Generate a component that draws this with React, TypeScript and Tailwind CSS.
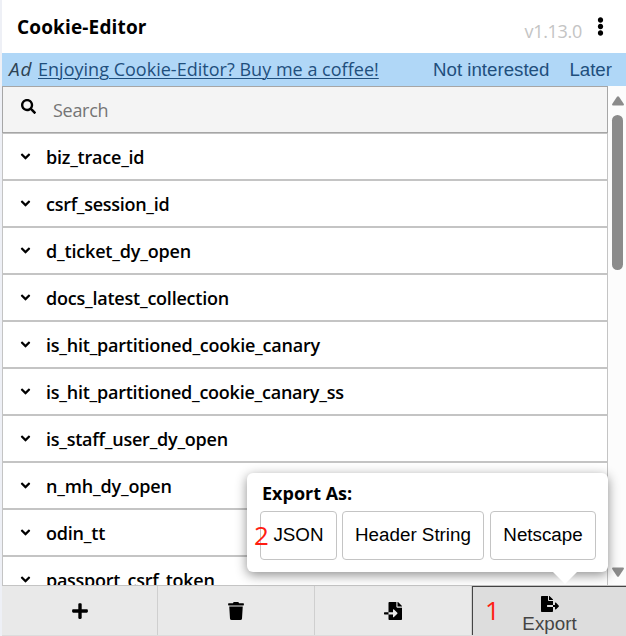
import { FaAngleDown, FaEllipsisV, FaFileExport, FaFileImport, FaPlus, FaSearch, FaTrash } from 'react-icons/fa';

const cookies = [
  { name: 'biz_trace_id', tracking: 'tracking-[-0.22px]' },
  { name: 'csrf_session_id', tracking: 'tracking-[-0.28px]' },
  { name: 'd_ticket_dy_open', tracking: 'tracking-[-0.18px]' },
  { name: 'docs_latest_collection', tracking: 'tracking-[-0.22px]' },
  { name: 'is_hit_partitioned_cookie_canary', tracking: 'tracking-[-0.22px]' },
  { name: 'is_hit_partitioned_cookie_canary_ss', tracking: 'tracking-[-0.24px]' },
  { name: 'is_staff_user_dy_open', tracking: 'tracking-[-0.24px]' },
  { name: 'n_mh_dy_open', tracking: 'tracking-[-0.18px]' },
  { name: 'odin_tt', tracking: 'tracking-[-0.2px]' },
  { name: 'passport_csrf_token', tracking: 'tracking-[-0.27px]' },
];

const sans = "font-['Open_Sans','Noto_Sans',sans-serif]";
const arial = "font-['Liberation_Sans',Arial,sans-serif]";

function Header() {
  return (
    <header className="flex h-[53px] shrink-0 items-start justify-between bg-white pr-[22px] pl-[15px]">
      <h1 className="pt-[14px] text-[19px] leading-[27px] font-bold tracking-[0.15px]">Cookie-Editor</h1>
      <div className="flex">
        <span className="pt-[18px] text-[18px] leading-[27px] tracking-[-0.3px] text-[#c4c4c4]">v1.13.0</span>
        <FaEllipsisV className="-mr-[6px] mt-[17px] ml-[9px] h-[19px] w-[19px]" />
      </div>
    </header>
  );
}

function AdBar() {
  return (
    <div className="flex h-[33px] shrink-0 items-center bg-[#b0d7f7] pr-[14px] pl-[7px] text-[18px] leading-[33px] whitespace-nowrap text-[#1f4f7d]">
      <span className="w-[29px] text-[19px] tracking-[0.8px] text-[#2d4353] italic">Ad</span>
      <a className="tracking-[0.02px] underline decoration-1 underline-offset-2">Enjoying Cookie-Editor? Buy me a coffee!</a>
      <div className={`ml-auto flex gap-5 text-[18.7px] ${arial}`}>
        <span>Not interested</span>
        <span>Later</span>
      </div>
    </div>
  );
}

function Scrollbar() {
  return (
    <div className="flex w-[18px] shrink-0 flex-col items-center bg-[#fcfcfc] pl-px">
      <svg className="mt-[10px] h-[10px] w-[12px]" viewBox="0 0 12 10" fill="#8b8b8b">
        <path d="M5 .8Q6-.4 7 .8L11.8 8Q12.3 9.5 11 9.5H1Q-.3 9.5.2 8Z" />
      </svg>
      <div className="mt-[9px] h-[155px] w-[11px] rounded-full bg-[#8b8b8b]" />
      <svg className="mt-auto mb-[8px] h-[10px] w-[12px]" viewBox="0 0 12 10" fill="#8b8b8b">
        <path d="M5 9.2Q6 10.4 7 9.2L11.8 2Q12.3.5 11 .5H1Q-.3.5.2 2Z" />
      </svg>
    </div>
  );
}

function ExportMenu() {
  const option = `flex h-[49px] items-center justify-center rounded-[4px] border border-[#c4c4c4] bg-white pb-px text-[18.8px] whitespace-nowrap ${arial}`;
  return (
    <div className="absolute top-[473px] left-[247px] h-[99px] w-[361px] rounded-[6px] bg-white pl-[13px] shadow-[0_3px_12px_rgba(0,0,0,0.45)]">
      <div className="h-[38px] pt-[7px] pl-[2px] text-[18px] leading-[27px] font-bold">Export As:</div>
      <div className="flex">
        <button className={`w-[77px] ${option}`}>JSON</button>
        <button className={`ml-[5px] w-[142px] ${option}`}>Header String</button>
        <button className={`ml-[6px] w-[106px] ${option}`}>Netscape</button>
      </div>
      <svg className="absolute top-[98px] left-[305px] h-[13px] w-[26px]" viewBox="0 0 26 13" fill="#fff">
        <path d="M0 0H26L13 13Z" />
      </svg>
      <span className="absolute top-[46px] left-[7px] text-[26px] leading-[32px] text-[#ff1d12]">2</span>
    </div>
  );
}

function Toolbar() {
  return (
    <div className="flex h-[51px] shrink-0 border-t border-b border-[#c4c4c4] border-b-[#dcdcdc] bg-[#e9e9e9]">
      <button className="flex w-[156px] items-center justify-center border-r border-[#cfcfcf]"><FaPlus className="h-[18px] w-[18px]" /></button>
      <button className="flex w-[157px] items-center justify-center border-r border-[#cfcfcf]"><FaTrash className="h-[18px] w-[18px]" /></button>
      <button className="flex w-[157px] items-center justify-center border-r border-[#cfcfcf]"><FaFileImport className="h-[18px] w-[18px]" /></button>
      <button className="relative flex flex-1 flex-col items-center border-t border-l border-[#444] bg-[#ddd] pt-[8px]">
        <FaFileExport className="h-[18px] w-[18px]" />
        <span className={`text-[18.8px] leading-[22px] text-[#444] ${arial}`}>Export</span>
        <span className={`absolute top-[7px] left-[12px] text-[26px] leading-[32px] text-[#ff1d12] ${sans}`}>1</span>
      </button>
    </div>
  );
}

export default function App() {
  return (
    <div className={`relative h-[636px] w-[626px] overflow-hidden bg-[#eef0f6] pl-[2px] text-black ${sans}`}>
      <div className="flex h-full flex-col">
        <Header />
        <AdBar />
        <div className="flex h-[499px] shrink-0 overflow-hidden bg-white">
          <div className="w-[606px] border-r border-l border-[#c4c4c4]">
            <div className="-mx-px flex h-[47px] border border-[#a6a6a6] bg-[#f4f4f4] pl-[18px]">
              <FaSearch className="mt-[12px] h-[15px] w-[15px]" />
              <span className="ml-[17px] pt-[9px] text-[18px] leading-[28px] tracking-[-0.3px] text-[#757575]">Search</span>
            </div>
            <div className="border-t border-[#c4c4c4]">
              {cookies.map((cookie) => (
                <div key={cookie.name} className="flex h-[47px] items-center border-b-2 border-[#c4c4c4] pl-[15px]">
                  <FaAngleDown className="h-[15px] w-[15px]" />
                  <span className={`ml-[13px] pt-[2px] text-[18px] leading-[27px] font-semibold ${cookie.tracking}`}>{cookie.name}</span>
                </div>
              ))}
            </div>
          </div>
          <Scrollbar />
        </div>
        <Toolbar />
      </div>
      <ExportMenu />
    </div>
  );
}
